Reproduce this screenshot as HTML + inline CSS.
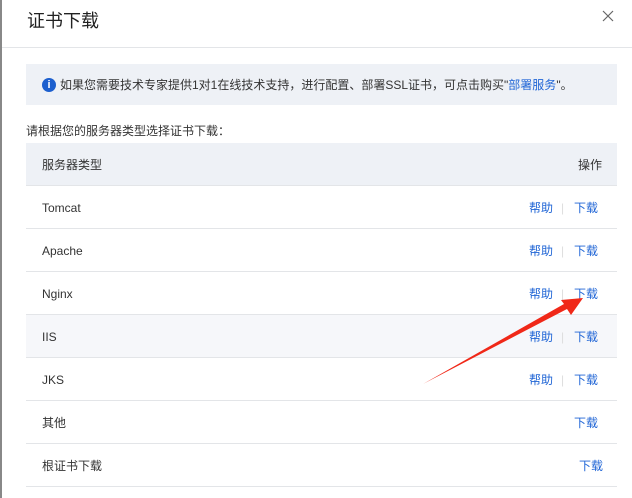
<html><head><style>
body{margin:0;width:632px;height:498px;background:#fff;font-family:"Liberation Sans","Noto Sans CJK SC",sans-serif;position:relative;overflow:hidden;color:#333}
.abs{position:absolute}
.row{position:absolute;left:26px;width:591px;height:42px;border-bottom:1px solid #e3e5e8;font-size:12px;line-height:44px}
.row .n{position:absolute;left:16px}
.a{color:#2166d6}
</style></head><body>
<div class="abs" style="left:0;top:0;width:2px;height:498px;background:#888"></div>
<div class="abs" style="left:27px;top:7px;font-size:18px;color:#222">证书下载</div>
<svg class="abs" style="left:600px;top:8px" width="16" height="16"><path d="M3 3L13 13M13 3L3 13" stroke="#666" stroke-width="1.2"/></svg>
<div class="abs" style="left:2px;top:47px;width:630px;height:1px;background:#e3e5e8"></div>
<div class="abs" style="left:26px;top:64px;width:591px;height:41px;background:#eef1f6;font-size:12px;line-height:42px">
<span class="abs" style="left:16px;top:14px;width:14px;height:14px;border-radius:50%;background:#1c5fce;color:#fff;font-size:11px;line-height:14px;text-align:center;font-weight:bold">i</span>
<span class="abs" style="left:34px;color:#333">如果您需要技术专家提供1对1在线技术支持，进行配置、部署SSL证书，可点击购买"<span class="a">部署服务</span>"。</span></div>
<div class="abs" style="left:26px;top:122px;font-size:12px">请根据您的服务器类型选择证书下载：</div>
<div class="row" style="top:143px;background:#eef1f6"><span class="n">服务器类型</span><span class="abs" style="right:15px">操作</span></div>
<div class="row" style="top:186px"><span class="n">Tomcat</span><span class="abs a" style="left:503px">帮助</span><span class="abs" style="left:535px;color:#ddd">|</span><span class="abs a" style="left:548px">下载</span></div>
<div class="row" style="top:229px"><span class="n">Apache</span><span class="abs a" style="left:503px">帮助</span><span class="abs" style="left:535px;color:#ddd">|</span><span class="abs a" style="left:548px">下载</span></div>
<div class="row" style="top:272px"><span class="n">Nginx</span><span class="abs a" style="left:503px">帮助</span><span class="abs" style="left:535px;color:#ddd">|</span><span class="abs a" style="left:548px">下载</span></div>
<div class="row" style="top:315px;background:#f6f7fa"><span class="n">IIS</span><span class="abs a" style="left:503px">帮助</span><span class="abs" style="left:535px;color:#ddd">|</span><span class="abs a" style="left:548px">下载</span></div>
<div class="row" style="top:358px"><span class="n">JKS</span><span class="abs a" style="left:503px">帮助</span><span class="abs" style="left:535px;color:#ddd">|</span><span class="abs a" style="left:548px">下载</span></div>
<div class="row" style="top:401px"><span class="n">其他</span><span class="abs a" style="left:548px">下载</span></div>
<div class="row" style="top:444px"><span class="n">根证书下载</span><span class="abs a" style="left:553px">下载</span></div>
<svg class="abs" style="left:0;top:0" width="632" height="498"><polygon points="423,384 567,309 571,315 583,298 561,300 564,304" fill="#f02818"/></svg>
</body></html>
